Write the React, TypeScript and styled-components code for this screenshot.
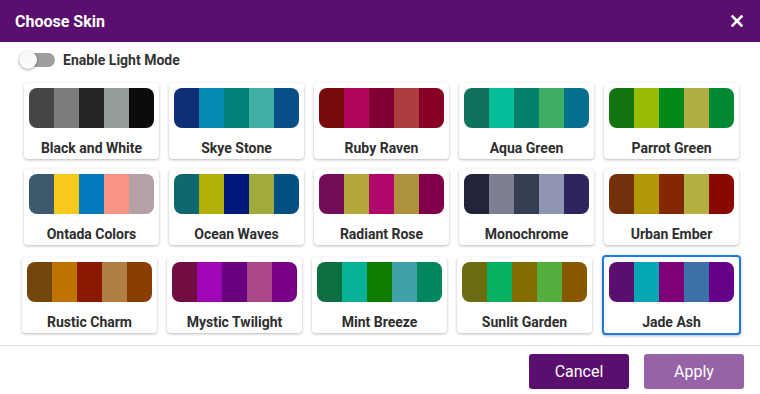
import styled, { createGlobalStyle } from "styled-components";

const GlobalStyle = createGlobalStyle`
    body {
        margin: 0;
        background: #ffffff;
        font-family: Roboto, "Liberation Sans", Arial, sans-serif;
    }
`;

type Skin = { name: string; colors: string[] };

const skins: Skin[] = [
    { name: "Black and White", colors: ["#474544", "#7b7d7b", "#232524", "#949c98", "#0c0c0c"] },
    { name: "Skye Stone", colors: ["#0e2f75", "#0689b0", "#017f7a", "#40aea3", "#064f88"] },
    { name: "Ruby Raven", colors: ["#780b0e", "#b1075a", "#810034", "#ad3c3f", "#870026"] },
    { name: "Aqua Green", colors: ["#0e725f", "#05be99", "#047f6d", "#3dae62", "#06718e"] },
    { name: "Parrot Green", colors: ["#13730f", "#98bc06", "#018a19", "#afad44", "#018833"] },
    { name: "Ontada Colors", colors: ["#3d5a6c", "#f8c81c", "#037ac0", "#f99384", "#b6a1a6"] },
    { name: "Ocean Waves", colors: ["#0f6770", "#b1b006", "#001a7c", "#a1ab3c", "#035084"] },
    { name: "Radiant Rose", colors: ["#730d5a", "#b3a73c", "#b1066c", "#ae913c", "#80004c"] },
    { name: "Monochrome", colors: ["#222539", "#7c7f92", "#353e52", "#9096b2", "#2e245f"] },
    { name: "Urban Ember", colors: ["#74300a", "#b29706", "#832802", "#b4b042", "#8b0800"] },
    { name: "Rustic Charm", colors: ["#71450b", "#be7200", "#8b1900", "#b17f44", "#8a3e00"] },
    { name: "Mystic Twilight", colors: ["#730c40", "#9f06b6", "#680080", "#ad4688", "#780086"] },
    { name: "Mint Breeze", colors: ["#0d7040", "#07b198", "#0f7e00", "#40a1ab", "#038560"] },
    { name: "Sunlit Garden", colors: ["#6c6d10", "#08b262", "#826c00", "#55ad3e", "#885800"] },
    { name: "Jade Ash", colors: ["#5a0f6e", "#04a7b3", "#7e0079", "#3b70a8", "#660087"] },
];

const Dialog = styled.div`
    width: 760px;
    height: 394px;
    display: flex;
    flex-direction: column;
    background: #fff;
`;

const Header = styled.div`
    flex-shrink: 0;
    height: 42px;
    background: #5a0f6e;
    color: #fff;
    display: flex;
    align-items: center;
    justify-content: space-between;
    padding: 0 16px 0 15px;
    h2 {
        margin: 0;
        font-size: 16px;
        font-weight: 700;
    }
`;

const CloseButton = styled.button`
    border: none;
    background: none;
    padding: 0;
    width: 14px;
    height: 14px;
    display: flex;
    align-items: center;
    justify-content: center;
    cursor: pointer;
`;

const ToggleRow = styled.div`
    flex-shrink: 0;
    margin: 8px 0 0 19px;
    height: 20px;
    display: flex;
    align-items: center;
    gap: 8px;
    span {
        font-size: 14px;
        font-weight: 700;
        color: #333;
    }
`;

const Switch = styled.div`
    position: relative;
    width: 36px;
    height: 14px;
    border-radius: 7px;
    background: #9e9e9e;
    &::after {
        content: "";
        position: absolute;
        left: 0;
        top: -2px;
        width: 18px;
        height: 18px;
        border-radius: 50%;
        background: #fafafa;
        box-shadow: 0 1px 3px rgba(0, 0, 0, 0.35);
    }
`;

const Grid = styled.div`
    flex-shrink: 0;
    margin-top: 13px;
    padding: 0 18px 0 21px;
    display: flex;
    flex-wrap: wrap;
    justify-content: center;
    align-items: center;
    gap: 10px;
`;

const Card = styled.div<{ $selected?: boolean }>`
    width: 125px;
    padding: 5px 5px 2px;
    background: #fff;
    border-radius: 4px;
    border: ${(p) => (p.$selected ? "2px solid #1f7ae0" : "none")};
    box-shadow: 0 1px 3px rgba(0, 0, 0, 0.28);
    cursor: pointer;
`;

const Swatch = styled.div`
    height: 40px;
    display: flex;
    border-radius: 8px;
    overflow: hidden;
`;

const Stripe = styled.div<{ $color: string }>`
    flex: 1;
    background: ${(p) => p.$color};
`;

const Label = styled.div`
    margin-top: 11px;
    line-height: 18px;
    text-align: center;
    font-size: 14px;
    font-weight: 700;
    color: #2e2e2e;
`;

const Footer = styled.div`
    flex-shrink: 0;
    margin-top: auto;
    border-top: 1px solid #e2e2e2;
    padding: 8px 16px 5px;
    display: flex;
    justify-content: flex-end;
    gap: 15px;
`;

const Button = styled.button<{ $disabled?: boolean }>`
    width: 100px;
    height: 35px;
    border: none;
    border-radius: 3px;
    font-family: inherit;
    font-size: 16px;
    color: #fff;
    background: ${(p) => (p.$disabled ? "#9563a6" : "#5a0f6e")};
    cursor: pointer;
`;

const App = () => {
    return (
        <>
            <GlobalStyle />
            <Dialog>
                <Header>
                    <h2>Choose Skin</h2>
                    <CloseButton>
                        <svg width="12" height="12" viewBox="0 0 12 12">
                            <path
                                d="M1.5 1.5 L10.5 10.5 M10.5 1.5 L1.5 10.5"
                                stroke="#fff"
                                strokeWidth="2.6"
                                strokeLinecap="square"
                            />
                        </svg>
                    </CloseButton>
                </Header>
                <ToggleRow>
                    <Switch />
                    <span>Enable Light Mode</span>
                </ToggleRow>
                <Grid>
                    {skins.map((skin) => (
                        <Card key={skin.name} $selected={skin.name === "Jade Ash"}>
                            <Swatch>
                                {skin.colors.map((c, i) => (
                                    <Stripe key={i} $color={c} />
                                ))}
                            </Swatch>
                            <Label>{skin.name}</Label>
                        </Card>
                    ))}
                </Grid>
                <Footer>
                    <Button>Cancel</Button>
                    <Button $disabled>Apply</Button>
                </Footer>
            </Dialog>
        </>
    );
};

export default App;
